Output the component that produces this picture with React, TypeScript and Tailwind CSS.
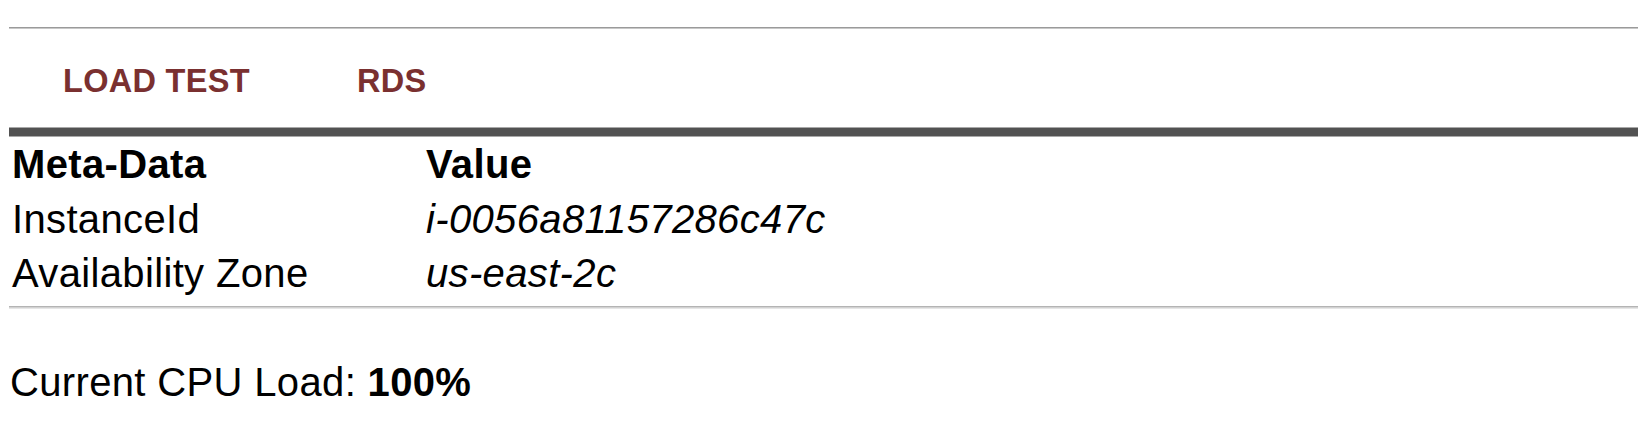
export default function App() {
  const rows = [
    { key: 'InstanceId', value: 'i-0056a81157286c47c' },
    { key: 'Availability Zone', value: 'us-east-2c' },
  ];

  return (
    <div className="h-[428px] w-full bg-white pl-[9px] pr-[12px] font-['Liberation_Sans',Arial,sans-serif] text-black">
      {/* top rule */}
      <div className="h-[27px]" />
      <div className="h-[2px] border-t border-b border-t-[#9a9a9a] border-b-[#c8c8c8]" />

      {/* nav links */}
      <div className="flex pt-[34px] text-[32.5px] font-bold leading-[36px] tracking-[0.3px] text-[#7a3030]">
        <a className="ml-[54px] uppercase">Load Test</a>
        <a className="ml-[107px] uppercase">RDS</a>
      </div>

      {/* thick divider */}
      <div className="mt-[28px] h-[10px] border-y border-y-[#a8a8a8] bg-[#525252]" />

      {/* meta-data table */}
      <div className="grid grid-cols-[414px_1fr] pl-[3px] text-[40px] leading-[54.5px] tracking-[0.35px]">
        <div className="font-bold">Meta-Data</div>
        <div className="font-bold">Value</div>
        {rows.map((row) => (
          <div key={row.key} className="contents">
            <div>{row.key}</div>
            <div className="italic">{row.value}</div>
          </div>
        ))}
      </div>

      <div className="mt-[5px] h-[3px] border-y border-t-[#b4b4b4] border-b-[#e6e6e6] bg-[#d2d2d2]" />

      {/* cpu load */}
      <div className="pt-[51px] pl-[1px] text-[40px] leading-[45px] tracking-[0.35px]">
        Current CPU Load: <b>100%</b>
      </div>
    </div>
  );
}
